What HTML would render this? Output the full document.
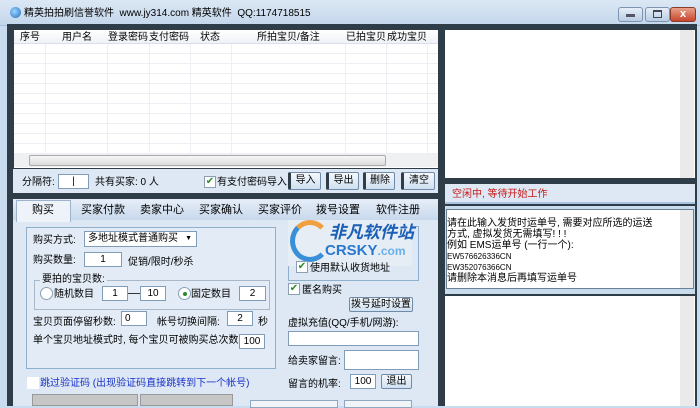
<!DOCTYPE html>
<html><head><meta charset="utf-8"><style>
*{margin:0;padding:0;box-sizing:border-box}
body{width:700px;height:406px;overflow:hidden;background:#c9dbee;font-family:"Liberation Sans","Noto Sans CJK SC",sans-serif;font-size:10px;color:#000;position:relative}
.a{position:absolute}
.t{position:absolute;white-space:nowrap;font-size:10px;line-height:12px}
.in{position:absolute;background:#fff;border:1px solid #7f9db9;font-size:10px;text-align:center;line-height:13px}
.btn{position:absolute;background:linear-gradient(#f4f8fc,#cfe0f1);border:1px solid #6f8ba8;border-radius:2px;text-align:center;font-size:10px;line-height:15px}
.cb{position:absolute;width:12px;height:12px;background:#fff;border:1px solid #8a9fb4;color:#2a8a2a;font-size:10px;line-height:10px;text-align:center}
</style></head><body>
<div class="a" style="left:0;top:0;width:700px;height:26px;background:linear-gradient(#dbe7f4,#c4d7ec);border-bottom:1px solid #a8bfd8"></div>
<div class="a" style="left:10px;top:7px;width:11px;height:11px;border-radius:50%;background:radial-gradient(circle at 40% 40%,#9fd4ff,#1d6fc0)"></div>
<div class="t" style="left:24px;top:8px;font-size:10px">精英拍拍刷信誉软件&nbsp; www.jy314.com 精英软件&nbsp; QQ:1174718515</div>
<div class="a" style="left:618px;top:7px;width:25px;height:15px;border:1px solid #7c94b0;border-radius:3px;background:linear-gradient(#e6eef8,#b9cde4)"></div>
<div class="a" style="left:626px;top:14px;width:9px;height:3px;background:#556;"></div>
<div class="a" style="left:645px;top:7px;width:25px;height:15px;border:1px solid #7c94b0;border-radius:3px;background:linear-gradient(#e6eef8,#b9cde4)"></div>
<div class="a" style="left:653px;top:10px;width:9px;height:8px;border:1px solid #445;border-top-width:2px"></div>
<div class="a" style="left:670px;top:7px;width:26px;height:15px;border:1px solid #8a3a2a;border-radius:3px;background:linear-gradient(#e8a08a,#c8462c);color:#fff;text-align:center;font-weight:bold;font-size:11px;line-height:13px">x</div>
<div class="a" style="left:7px;top:24px;width:690px;height:382px;background:#2f3d48"></div>
<div class="a" style="left:14px;top:30px;width:424px;height:138px;background:#fff"></div>
<div class="a" style="left:14px;top:30px;width:424px;height:14px;background:linear-gradient(#fff,#eef2f6);border-bottom:1px solid #dde"></div>
<div class="t" style="left:20px;top:32px">序号</div>
<div class="t" style="left:62px;top:32px">用户名</div>
<div class="t" style="left:108px;top:32px">登录密码</div>
<div class="t" style="left:149px;top:32px">支付密码</div>
<div class="t" style="left:200px;top:32px">状态</div>
<div class="t" style="left:257px;top:32px">所拍宝贝/备注</div>
<div class="t" style="left:346px;top:32px">已拍宝贝</div>
<div class="t" style="left:387px;top:32px">成功宝贝</div>
<div class="a" style="left:14px;top:44px;width:424px;height:110px;background:repeating-linear-gradient(#fff 0 9px,#eceff3 9px 10px)"></div>
<div class="a" style="left:45px;top:44px;width:1px;height:110px;background:#eceff3"></div>
<div class="a" style="left:107px;top:44px;width:1px;height:110px;background:#eceff3"></div>
<div class="a" style="left:149px;top:44px;width:1px;height:110px;background:#eceff3"></div>
<div class="a" style="left:190px;top:44px;width:1px;height:110px;background:#eceff3"></div>
<div class="a" style="left:231px;top:44px;width:1px;height:110px;background:#eceff3"></div>
<div class="a" style="left:345px;top:44px;width:1px;height:110px;background:#eceff3"></div>
<div class="a" style="left:386px;top:44px;width:1px;height:110px;background:#eceff3"></div>
<div class="a" style="left:427px;top:44px;width:1px;height:110px;background:#eceff3"></div>
<div class="a" style="left:14px;top:154px;width:424px;height:13px;background:#eef0f2"></div>
<div class="a" style="left:29px;top:155px;width:357px;height:11px;background:linear-gradient(#f6f6f6,#dcdcdc);border:1px solid #aaa;border-radius:2px"></div>
<div class="a" style="left:13px;top:169px;width:425px;height:24px;background:#dde8f4"></div>
<div class="t" style="left:22px;top:177px">分隔符:</div>
<div class="in" style="left:58px;top:174px;width:31px;height:15px">|</div>
<div class="t" style="left:95px;top:177px">共有买家: 0 人</div>
<div class="cb" style="left:204px;top:176px">✔</div>
<div class="t" style="left:217px;top:177px">有支付密码导入</div>
<div class="btn" style="left:288px;top:172px;width:33px;height:18px;border-left:3px solid #2f3d48">导入</div>
<div class="btn" style="left:326px;top:172px;width:33px;height:18px;border-left:3px solid #2f3d48">导出</div>
<div class="btn" style="left:363px;top:172px;width:32px;height:18px;border-left:3px solid #2f3d48">删除</div>
<div class="btn" style="left:401px;top:172px;width:34px;height:18px;border-left:3px solid #2f3d48">清空</div>
<div class="a" style="left:13px;top:199px;width:425px;height:207px;background:#dde8f4"></div>
<div class="a" style="left:13px;top:199px;width:425px;height:21px;background:linear-gradient(#e6eef8,#c8d9ec)"></div>
<div class="a" style="left:16px;top:200px;width:55px;height:22px;background:#eef3f9;border:1px solid #9db3cb;border-bottom:none"></div>
<div class="t" style="left:32px;top:204px;font-size:11px;line-height:13px">购买</div>
<div class="t" style="left:81px;top:204px;font-size:11px;line-height:13px">买家付款</div>
<div class="t" style="left:140px;top:204px;font-size:11px;line-height:13px">卖家中心</div>
<div class="t" style="left:199px;top:204px;font-size:11px;line-height:13px">买家确认</div>
<div class="t" style="left:258px;top:204px;font-size:11px;line-height:13px">买家评价</div>
<div class="t" style="left:316px;top:204px;font-size:11px;line-height:13px">拨号设置</div>
<div class="t" style="left:376px;top:204px;font-size:11px;line-height:13px">软件注册</div>
<div class="a" style="left:26px;top:227px;width:250px;height:142px;border:1px solid #8fb0cc;background:#e3ecf6"></div>
<div class="t" style="left:33px;top:235px">购买方式:</div>
<div class="a" style="left:84px;top:231px;width:113px;height:16px;background:#fff;border:1px solid #7f9db9;font-size:10px;line-height:14px;padding-left:3px">多地址模式普通购买<span style="position:absolute;right:4px;font-size:7px">▼</span></div>
<div class="t" style="left:33px;top:255px">购买数量:</div>
<div class="in" style="left:84px;top:252px;width:38px;height:15px">1</div>
<div class="t" style="left:128px;top:257px">促销/限时/秒杀</div>
<div class="a" style="left:34px;top:280px;width:236px;height:30px;border:1px solid #a8b8c8"></div>
<div class="t" style="left:40px;top:274px;background:#e3ecf6;padding:0 2px">要拍的宝贝数:</div>
<div class="a" style="left:40px;top:287px;width:13px;height:13px;border-radius:50%;background:#fff;border:1px solid #8a9fb4"></div>
<div class="t" style="left:54px;top:289px">随机数目</div>
<div class="in" style="left:102px;top:286px;width:26px;height:15px">1</div>
<div class="a" style="left:128px;top:293px;width:12px;height:1px;background:#333"></div>
<div class="in" style="left:140px;top:286px;width:26px;height:15px">10</div>
<div class="a" style="left:178px;top:287px;width:13px;height:13px;border-radius:50%;background:#fff;border:1px solid #8a9fb4"></div>
<div class="a" style="left:183px;top:292px;width:4px;height:4px;border-radius:50%;background:#2a8a2a"></div>
<div class="t" style="left:191px;top:289px">固定数目</div>
<div class="in" style="left:239px;top:286px;width:27px;height:15px">2</div>
<div class="t" style="left:33px;top:317px">宝贝页面停留秒数:</div>
<div class="in" style="left:121px;top:311px;width:26px;height:15px;text-align:left;padding-left:3px">0</div>
<div class="t" style="left:157px;top:317px">帐号切换间隔:</div>
<div class="in" style="left:227px;top:311px;width:26px;height:15px">2</div>
<div class="t" style="left:258px;top:317px">秒</div>
<div class="t" style="left:33px;top:335px">单个宝贝地址模式时, 每个宝贝可被购买总次数:</div>
<div class="in" style="left:239px;top:334px;width:26px;height:15px">100</div>
<div class="cb" style="left:27px;top:377px;border:none"></div>
<div class="t" style="left:40px;top:378px;color:#1a32c8">跳过验证码 (出现验证码直接跳转到下一个帐号)</div>
<div class="a" style="left:32px;top:394px;width:106px;height:12px;background:#c6c6c6;border:1px solid #999"></div>
<div class="a" style="left:140px;top:394px;width:93px;height:12px;background:#c6c6c6;border:1px solid #999"></div>
<div class="a" style="left:250px;top:400px;width:88px;height:8px;background:#f0f4f8;border:1px solid #8fa8c0"></div>
<div class="a" style="left:344px;top:400px;width:68px;height:8px;background:#f0f4f8;border:1px solid #8fa8c0"></div>
<div class="a" style="left:288px;top:226px;width:131px;height:55px;border:1px solid #8fb0cc"></div>
<div class="a" style="left:288px;top:220px;width:124px;height:46px;background:#e6edf4"></div>
<div class="a" style="left:290px;top:220px;width:40px;height:42px;border-radius:50%;border:5px solid #3a8fd8;border-right-color:transparent;border-top-color:#f0a040"></div>
<div class="t" style="left:329px;top:223px;font-size:17px;line-height:19px;font-weight:bold;font-style:italic;color:#1c5fb8">非凡软件站</div>
<div class="t" style="left:325px;top:243px;font-size:15px;line-height:16px;font-weight:bold;color:#2a78d0">CRSKY<span style="color:#6ab0e8;font-size:12px">.com</span></div>
<div class="cb" style="left:296px;top:261px">✔</div>
<div class="t" style="left:310px;top:263px">使用默认收货地址</div>
<div class="cb" style="left:288px;top:283px">✔</div>
<div class="t" style="left:302px;top:285px">匿名购买</div>
<div class="btn" style="left:349px;top:297px;width:64px;height:15px;line-height:13px">拨号延时设置</div>
<div class="t" style="left:288px;top:318px">虚拟充值(QQ/手机/网游):</div>
<div class="a" style="left:288px;top:331px;width:131px;height:15px;background:#fff;border:1px solid #7f9db9"></div>
<div class="t" style="left:288px;top:356px">给卖家留言:</div>
<div class="a" style="left:344px;top:350px;width:75px;height:20px;background:#fff;border:1px solid #7f9db9"></div>
<div class="t" style="left:288px;top:379px">留言的机率:</div>
<div class="in" style="left:350px;top:374px;width:26px;height:15px">100</div>
<div class="btn" style="left:381px;top:374px;width:31px;height:15px;line-height:13px">退出</div>
<div class="a" style="left:445px;top:30px;width:250px;height:148px;background:#fff"></div>
<div class="a" style="left:680px;top:30px;width:14px;height:148px;background:#eaeaea"></div>
<div class="a" style="left:445px;top:184px;width:250px;height:20px;background:#dde8f4;border-bottom:2px solid #a8c4de"></div>
<div class="t" style="left:452px;top:189px;color:#c81818">空闲中, 等待开始工作</div>
<div class="a" style="left:445px;top:206px;width:250px;height:88px;background:#c8dcee"></div>
<div class="a" style="left:446px;top:209px;width:248px;height:80px;background:#fff;border:1px solid #6a8296"></div>
<div class="a" style="left:680px;top:210px;width:13px;height:78px;background:#eaeaea"></div>
<div class="t" style="left:447px;top:218px;font-size:10px;line-height:11px">请在此输入发货时运单号, 需要对应所选的运送<br>方式, 虚拟发货无需填写! ! !<br>例如 EMS运单号 (一行一个):<br><span style="font-size:8px">EW576626336CN</span><br><span style="font-size:8px">EW352076366CN</span><br>请删除本消息后再填写运单号</div>
<div class="a" style="left:445px;top:296px;width:250px;height:110px;background:#fff"></div>
<div class="a" style="left:680px;top:296px;width:14px;height:110px;background:#eaeaea"></div>
</body></html>
